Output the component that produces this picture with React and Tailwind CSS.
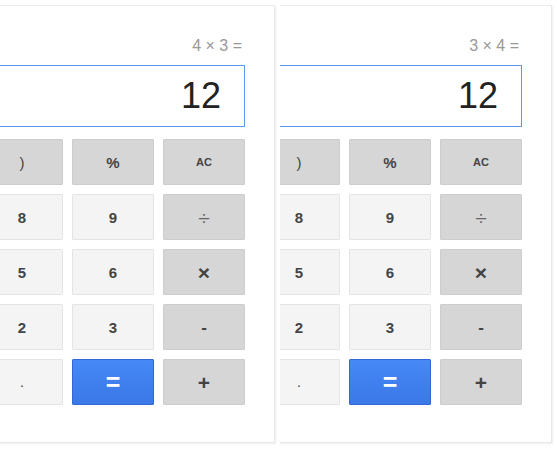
import React from "react";

const ROWS = [
  [[")", "dark"], ["%", "dark"], ["AC", "dark"]],
  [["8", "light"], ["9", "light"], ["÷", "dark"]],
  [["5", "light"], ["6", "light"], ["×", "dark"]],
  [["2", "light"], ["3", "light"], ["-", "dark"]],
  [[".", "light"], ["=", "blue"], ["+", "dark"]],
];

function Key({ label, kind }) {
  let cls =
    "h-[46px] flex items-center justify-center rounded-[1px] border select-none ";
  if (kind === "dark") cls += "bg-[#d6d6d6] border-[#cdcdcd] text-[#444] ";
  else if (kind === "light") cls += "bg-[#f4f4f4] border-[#e4e4e4] text-[#444] ";
  else cls += "bg-gradient-to-b from-[#4689f7] to-[#3a78e6] border-[#3367d6] text-white ";

  let txt = "text-[15px] font-bold";
  if (label === ")") txt = "text-[15px] font-normal";
  if (label === "AC") txt = "text-[11px] font-bold";
  if (label === "÷") txt = "text-[21px] font-normal text-[#666]";
  if (label === "×") txt = "text-[21px] font-bold";
  if (label === "-") txt = "text-[17px] font-bold";
  if (label === "+") txt = "text-[21px] font-bold";
  if (label === "=") txt = "text-[25px] font-bold";
  if (label === ".") txt = "text-[14px] font-normal";
  return (
    <div className={cls}>
      <span className={txt + " leading-none"}>{label}</span>
    </div>
  );
}

function Card({ expr, offset }) {
  return (
    <div
      className={
        "mt-[5px] w-[325px] h-[438px] bg-white border border-[#e9e9e9] shadow-[1px_1px_2px_rgba(0,0,0,0.07)] pl-[30px] pr-[29px] pt-[32px] " +
        offset
      }
    >
      <div className="h-[16px] leading-[16px] text-right pr-[3px] text-[16px] text-[#999]">
        {expr}
      </div>
      <div className="mt-[11px] h-[62px] border border-[#5c95f0] bg-white flex items-center justify-end pr-[23px]">
        <span className="text-[36px] leading-none text-[#222]">12</span>
      </div>
      <div className="mt-[12px] grid grid-cols-[82px_82px_82px] auto-rows-[46px] gap-[9px]">
        {ROWS.flat().map(([l, k], i) => (
          <Key key={i} label={l} kind={k} />
        ))}
      </div>
    </div>
  );
}

export default function App() {
  return (
    <div className="w-[557px] h-[450px] bg-white overflow-hidden flex font-['Liberation_Sans',Arial,sans-serif]">
      <div className="w-[277px] h-full overflow-hidden shrink-0">
        <Card expr="4 × 3 =" offset="ml-[-50px]" />
      </div>
      <div className="ml-[3px] flex-1 h-full overflow-hidden">
        <Card expr="3 × 4 =" offset="ml-[-53px]" />
      </div>
    </div>
  );
}
